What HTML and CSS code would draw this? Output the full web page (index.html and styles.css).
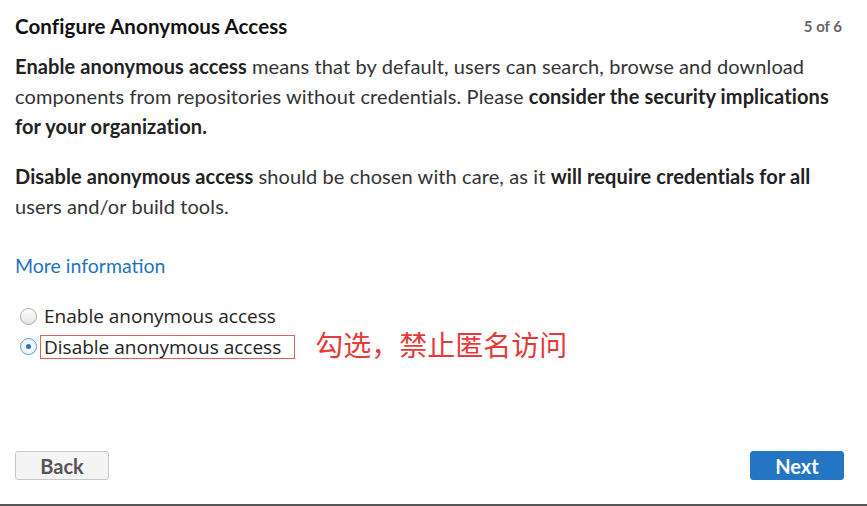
FILE: index.html
```html
<!DOCTYPE html>
<html>
<head>
<meta charset="utf-8">
<link rel="stylesheet" href="styles.css">
</head>
<body>
<div class="page">
  <div class="header">
    <h1 class="title">Configure Anonymous Access</h1>
    <span class="step">5 of 6</span>
  </div>
  <p class="para"><b>Enable anonymous access</b> means that by default, users can search, browse and download<br>components from repositories without credentials. Please <b>consider the security implications</b><br><b>for your organization.</b></p>
  <p class="para"><b>Disable anonymous access</b> should be chosen with care, as it <b>will require credentials for all</b><br>users and/or build tools.</p>
  <a class="more" href="#">More information</a>
  <div class="options">
    <label class="option"><span class="radio"></span><span class="label">Enable anonymous access</span></label>
    <div class="option-row">
      <label class="option"><span class="radio checked"></span><span class="label boxed">Disable anonymous access</span></label>
      <span class="note">勾选，禁止匿名访问</span>
    </div>
  </div>
  <div class="footer">
    <button class="btn back">Back</button>
    <button class="btn next">Next</button>
  </div>
</div>
</body>
</html>
```
FILE: styles.css
```css
html, body {
  margin: 0;
  padding: 0;
  background: #fff;
}
.page {
  width: 867px;
  height: 506px;
  box-sizing: border-box;
  padding: 0 23px 0 15px;
  border-bottom: 2px solid #555;
  font-family: Lato, "Liberation Sans", sans-serif;
  color: #333;
  display: flex;
  flex-direction: column;
}
.header {
  display: flex;
  justify-content: space-between;
  align-items: center;
  height: 52px;
  margin-bottom: -1px;
}
.title {
  margin: 0;
  font-size: 20.5px;
  letter-spacing: 0.1px;
  font-weight: 700;
  color: #111;
}
.step {
  font-size: 15px;
  font-weight: 700;
  color: #666;
  padding-right: 2px;
}
.para {
  margin: 0 0 20px 0;
  font-size: 20px;
  letter-spacing: 0.1px;
  line-height: 30px;
}
.para b {
  font-weight: 700;
  color: #222;
}
.more {
  margin-top: 10px;
  font-size: 19.5px;
  line-height: 30px;
  color: #1f73be;
  text-decoration: none;
  align-self: flex-start;
}
.options {
  margin-top: 20px;
  display: flex;
  flex-direction: column;
}
.option-row {
  display: flex;
  align-items: center;
}
.option {
  display: flex;
  align-items: center;
  height: 30px;
  font-family: "Open Sans", sans-serif;
  font-size: 19px;
  color: #222;
}
.radio {
  width: 17px;
  height: 17px;
  box-sizing: border-box;
  border-radius: 50%;
  border: 1px solid #aaa;
  background: linear-gradient(#fff, #e4e4e4);
  margin: 0 3px 0 5px;
  flex: none;
  position: relative;
}
.radio.checked {
  border-color: #5a9bd8;
  background: #eef5fc;
}
.radio.checked::after {
  content: "";
  position: absolute;
  left: 5px;
  top: 5px;
  width: 5px;
  height: 5px;
  border-radius: 50%;
  background: #2a72c0;
}
.label {
  line-height: 22px;
  border: 1px solid transparent;
  padding: 0 13px 0 3px;
}
.boxed {
  border-color: #e26060;
  margin-top: 2px;
}
.note {
  margin-left: 20px;
  margin-top: -5px;
  font-family: "Noto Sans CJK SC", sans-serif;
  font-size: 28px;
  color: #e53a3a;
  line-height: 30px;
}
.footer {
  margin-top: auto;
  margin-bottom: 24px;
  display: flex;
  justify-content: space-between;
}
.btn {
  width: 94px;
  height: 29px;
  border-radius: 3px;
  font-family: Lato, sans-serif;
  font-size: 20px;
  font-weight: 700;
  padding: 0;
}
.back {
  background: #f4f4f4;
  border: 1px solid #c8c8c8;
  color: #555;
}
.next {
  background: #2476c4;
  border: 1px solid #2476c4;
  color: #fff;
}
```
